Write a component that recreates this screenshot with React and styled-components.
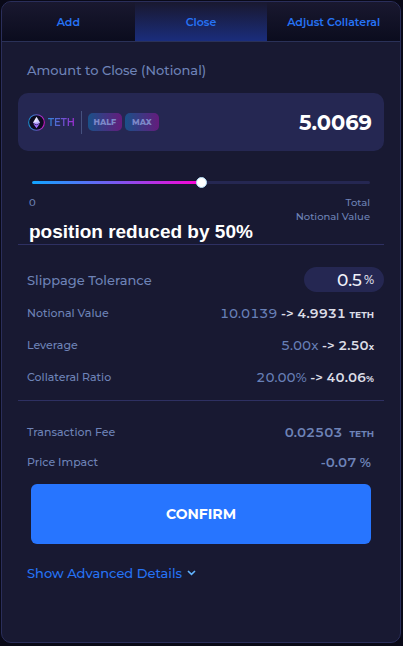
import React, { useState } from 'react'
import styled, { createGlobalStyle } from 'styled-components';

const tabs = ['Add', 'Close', 'Adjust Collateral'];

export default function App() {
    const [activeTab, setActiveTab] = useState('Close');
    const [amount, setAmount] = useState('5.0069');
    const [percent, setPercent] = useState(50);
    const [slippage, setSlippage] = useState('0.5');

    return (
    <>
        <GlobalStyle />
        <Panel>
            <Tabs>
                {tabs.map((tab) => (
                    <Tab key={tab} type="button" $active={tab === activeTab} onClick={() => setActiveTab(tab)}>
                        {tab}
                    </Tab>
                ))}
            </Tabs>
            <Content>
                <Title htmlFor="amount">Amount to Close (Notional)</Title>
                <AmountBox>
                    <EthLogo />
                    <TokenName>TETH</TokenName>
                    <Separator />
                    <SmallButton type="button">HALF</SmallButton>
                    <SmallButton type="button">MAX</SmallButton>
                    <AmountInput id="amount" value={amount} onChange={(e) => setAmount(e.target.value)} />
                </AmountBox>
                <SliderArea>
                    <Slider
                        type="range"
                        min="0"
                        max="100"
                        aria-label="Amount to close"
                        value={percent}
                        style={{ '--fill': `${percent}%` }}
                        onChange={(e) => setPercent(Number(e.target.value))}
                    />
                </SliderArea>
                <Scale>
                    <div>
                        <ScaleLabel>0</ScaleLabel>
                        <Caption>position reduced by {percent}%</Caption>
                    </div>
                    <ScaleLabel $right>Total<br />Notional Value</ScaleLabel>
                </Scale>
                <Divider />
                <SlippageRow>
                    <SlippageLabel htmlFor="slippage">Slippage Tolerance</SlippageLabel>
                    <SlippageBox>
                        <SlippageInput id="slippage" value={slippage} onChange={(e) => setSlippage(e.target.value)} />
                        %
                    </SlippageBox>
                </SlippageRow>
                <Details $rowHeight={32}>
                    <dt>Notional Value</dt>
                    <Value><Old>10.0139</Old> -&gt; 4.9931 <Unit>TETH</Unit></Value>
                    <dt>Leverage</dt>
                    <Value><Old>5.00x</Old> -&gt; 2.50<Unit>x</Unit></Value>
                    <dt>Collateral Ratio</dt>
                    <Value><Old>20.00%</Old> -&gt; 40.06<Unit>%</Unit></Value>
                </Details>
                <Divider />
                <Fees $rowHeight={30}>
                    <dt>Transaction Fee</dt>
                    <Value $muted>0.02503 &nbsp;<Unit>TETH</Unit></Value>
                    <dt>Price Impact</dt>
                    <Value $muted $inset>-0.07 %</Value>
                </Fees>
                <ConfirmButton type="button">CONFIRM</ConfirmButton>
                <AdvancedLink href="#details">
                    Show Advanced Details
                    <Chevron />
                </AdvancedLink>
            </Content>
        </Panel>
    </>
  )
}

function EthLogo() {
    return (
    <Logo viewBox="0 0 18 18" aria-hidden="true">
        <defs>
            <linearGradient id="ring" x1="0" y1="0" x2="1" y2="0">
                <stop offset="0" stopColor="#1b8fd0" />
                <stop offset="0.5" stopColor="#5b62c8" />
                <stop offset="1" stopColor="#d012c0" />
            </linearGradient>
            <linearGradient id="gem" x1="0" y1="0" x2="0" y2="1">
                <stop offset="0" stopColor="#ffffff" />
                <stop offset="0.6" stopColor="#e4e2ff" />
                <stop offset="1" stopColor="#8d5cf4" />
            </linearGradient>
        </defs>
        <circle cx="9" cy="9" r="8.3" fill="#0c0b20" stroke="url(#ring)" strokeWidth="1.1" />
        <path d="M9 3L12.8 9.2L9 11.4L5.2 9.2Z" fill="url(#gem)" />
        <path d="M5.4 10L9 12L12.6 10L9 15.2Z" fill="#a06cff" />
        <path d="M9 3V11.4L12.8 9.2Z" fill="#a9a4fa" opacity="0.35" />
    </Logo>
  )
}

function Chevron() {
    return (
    <ChevronIcon viewBox="0 0 9 6" aria-hidden="true">
        <path d="M1 1L4.5 4.4L8 1" fill="none" stroke="#62b4ff" strokeWidth="1.6" />
    </ChevronIcon>
  )
}

const GlobalStyle = createGlobalStyle`
  * {
    box-sizing: border-box;
  }

  body {
    margin: 0;
    background: #090917;
    font-family: Montserrat, Inter, sans-serif;
    font-weight: 500;
    color: #6e83b7;
  }

  button, input {
    font-family: inherit;
    border: none;
    padding: 0;
  }
`;

const Panel = styled.main`
  margin: 1px 2px 3px 1px;
  padding-bottom: 60px;
  border: 1px solid #2a2e5a;
  border-radius: 10px;
  background: #181932;
  overflow: hidden;
`;

const Tabs = styled.nav`
  display: grid;
  grid-template-columns: repeat(3, 1fr);
  height: 40px;
  border-bottom: 1px solid #2a3158;
`;

const Tab = styled.button`
  background: ${({ $active }) => $active
    ? 'linear-gradient(#19182f, #1a2d7c)'
    : 'linear-gradient(#19182f, #0b0c1e)'};
  color: #2673f5;
  font-size: 11px;
  font-weight: 600;
  cursor: pointer;
`;

const Content = styled.div`
  display: flex;
  flex-direction: column;
  padding: 19px 16px 0;
`;

const Title = styled.label`
  padding-left: 9px;
  font-size: 13px;
  line-height: 18px;
`;

const AmountBox = styled.div`
  display: flex;
  align-items: center;
  height: 58px;
  margin-top: 14px;
  padding: 0 12px 0 10px;
  border-radius: 10px;
  background: #252752;
`;

const Logo = styled.svg`
  width: 17px;
  height: 17px;
`;

const TokenName = styled.span`
  margin-left: 3px;
  font-size: 10px;
  font-weight: 600;
  background: linear-gradient(90deg, #2d86d6, #a02bd0);
  background-clip: text;
  color: transparent;
`;

const Separator = styled.span`
  width: 1px;
  height: 23px;
  margin: 0 6px;
  background: #46517f;
`;

const SmallButton = styled.button`
  width: 34px;
  height: 18px;
  margin-right: 3px;
  border-radius: 5px;
  background: linear-gradient(90deg, #1a5088, #641c7c);
  color: #7c88c8;
  font-size: 8px;
  font-weight: 800;
  cursor: pointer;
`;

const AmountInput = styled.input`
  flex: 1;
  min-width: 0;
  background: none;
  color: #fff;
  font-size: 21px;
  font-weight: 700;
  text-align: right;
  outline: none;
`;

const SliderArea = styled.div`
  display: flex;
  padding: 26px 14px 7px;
`;

const Slider = styled.input`
  flex: 1;
  min-width: 0;
  height: 11px;
  margin: 0;
  appearance: none;
  background: none;
  cursor: pointer;

  &::-webkit-slider-runnable-track {
    height: 3px;
    border-radius: 2px;
    background: linear-gradient(90deg, #11a5ff, #7a58f0 50%, #ff00d4) 0 0 / var(--fill) 100% no-repeat #252752;
  }

  &::-webkit-slider-thumb {
    appearance: none;
    width: 11px;
    height: 11px;
    margin-top: -4px;
    border: 1px solid #b4dcf4;
    border-radius: 50%;
    background: #fff;
  }
`;

const Scale = styled.div`
  display: flex;
  justify-content: space-between;
  padding: 1px 14px 1px 11px;
`;

const ScaleLabel = styled.div`
  font-size: 10px;
  line-height: 14px;
  text-align: ${({ $right }) => ($right ? 'right' : 'left')};
`;

const Caption = styled.div`
  margin-top: 11px;
  color: #fff;
  font-family: "Liberation Sans", Arial, sans-serif;
  font-size: 19px;
  font-weight: 700;
  line-height: 22px;
  white-space: nowrap;
`;

const Divider = styled.hr`
  width: 100%;
  height: 1px;
  margin: 0;
  border: none;
  background: #2e3062;
`;

const SlippageRow = styled.div`
  display: flex;
  align-items: center;
  justify-content: space-between;
  padding: 22px 0 5px 9px;
`;

const SlippageLabel = styled.label`
  font-size: 13px;
`;

const SlippageBox = styled.div`
  display: flex;
  align-items: center;
  gap: 2px;
  width: 80px;
  height: 25px;
  padding: 0 10px;
  border-radius: 13px;
  background: #252752;
  color: #e4e6f4;
  font-size: 12px;
`;

const SlippageInput = styled.input`
  flex: 1;
  min-width: 0;
  background: none;
  color: #f0f1fa;
  font-size: 17px;
  font-weight: 500;
  text-align: right;
  outline: none;
`;

const Details = styled.dl`
  display: grid;
  grid-template-columns: auto 1fr;
  grid-auto-rows: ${({ $rowHeight }) => $rowHeight}px;
  align-items: center;
  margin: 0;
  padding: 0 10px 7px 9px;
  font-size: 11px;
`;

const Fees = styled(Details)`
  padding-top: 16px;
`;

const Value = styled.dd`
  margin: 0;
  padding-right: ${({ $inset }) => ($inset ? 3 : 0)}px;
  color: ${({ $muted }) => ($muted ? '#6e83b7' : '#dcdde6')};
  font-size: 13px;
  font-weight: 600;
  font-variant-numeric: tabular-nums;
  text-align: right;
`;

const Old = styled.span`
  color: #6880b8;
  font-weight: 500;
`;

const Unit = styled.span`
  font-size: 9px;
  font-weight: 700;
`;

const ConfirmButton = styled.button`
  height: 60px;
  margin: 0 13px;
  border-radius: 6px;
  background: #2775ff;
  color: #fff;
  font-size: 14px;
  font-weight: 700;
  cursor: pointer;
`;

const AdvancedLink = styled.a`
  display: flex;
  align-items: center;
  gap: 5px;
  margin-top: 20px;
  padding-left: 9px;
  color: #2673f5;
  font-size: 13px;
  line-height: 18px;
  text-decoration: none;
`;

const ChevronIcon = styled.svg`
  width: 9px;
  height: 6px;
`;
